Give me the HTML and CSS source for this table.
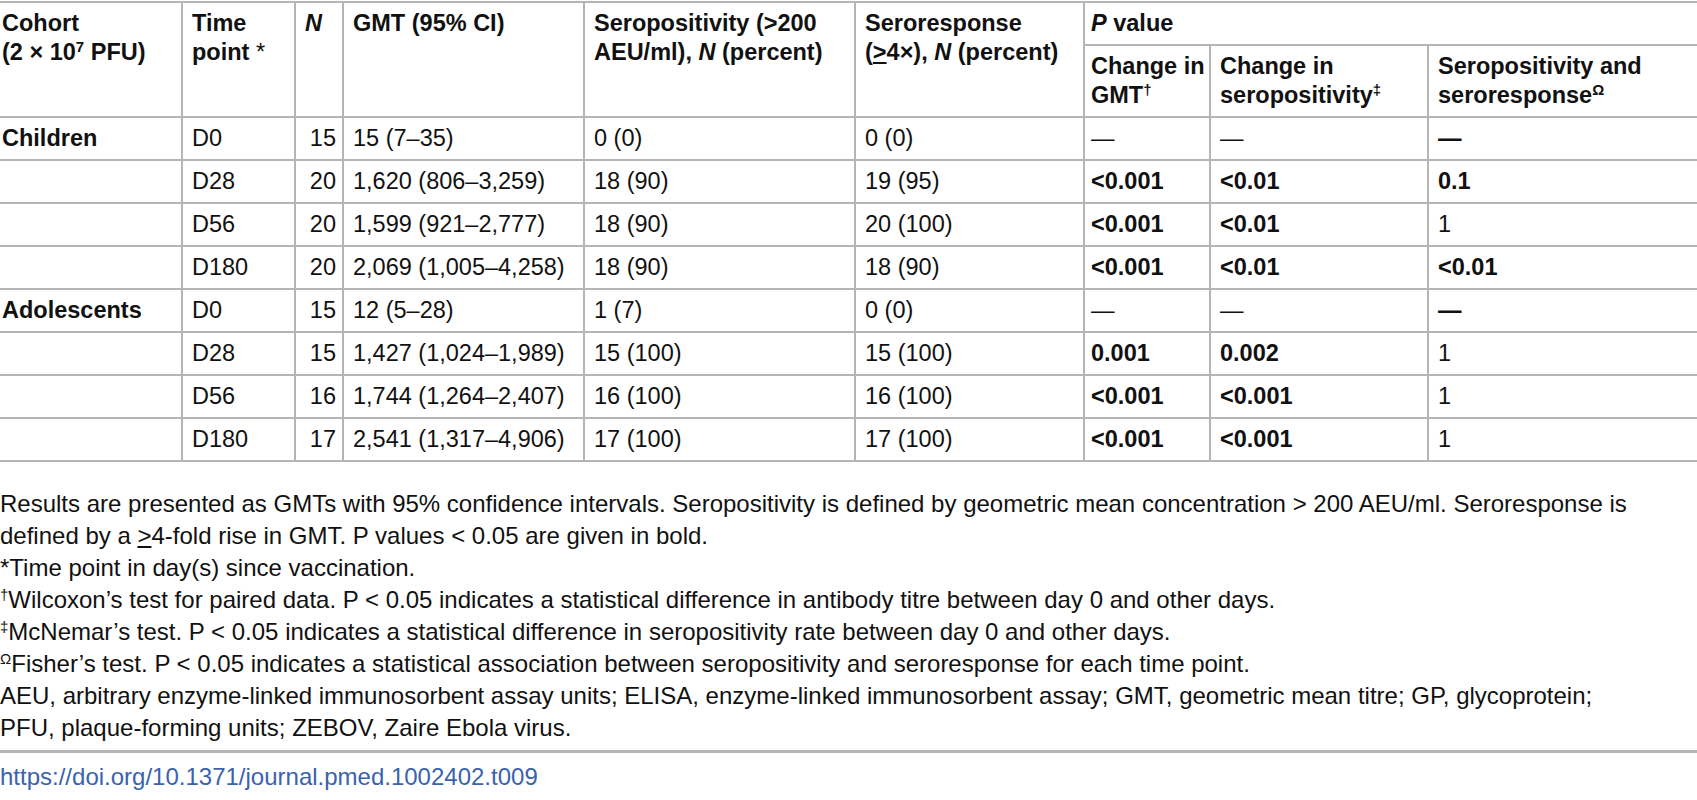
FILE: index.html
```html
<!DOCTYPE html>
<html lang="en">
<head>
<meta charset="utf-8">
<title>Table 9</title>
<link rel="stylesheet" href="styles.css">
</head>
<body>
<div class="page">
  <table class="data">
    <colgroup>
      <col class="c1"><col class="c2"><col class="c3"><col class="c4"><col class="c5"><col class="c6"><col class="c7"><col class="c8"><col class="c9">
    </colgroup>
    <thead>
      <tr>
        <th rowspan="2" class="first">Cohort<br>(2 × 10<sup>7</sup> PFU)</th>
        <th rowspan="2">Time<br>point <span class="ast">*</span></th>
        <th rowspan="2"><i>N</i></th>
        <th rowspan="2">GMT (95% CI)</th>
        <th rowspan="2">Seropositivity (&gt;200 AEU/ml), <i>N</i> (percent)</th>
        <th rowspan="2">Seroresponse (<u>&gt;</u>4×), <i>N</i> (percent)</th>
        <th colspan="3" class="pv"><i>P</i> value</th>
      </tr>
      <tr>
        <th class="pv">Change in GMT<sup>†</sup></th>
        <th>Change in seropositivity<sup>‡</sup></th>
        <th>Seropositivity and seroresponse<sup>Ω</sup></th>
      </tr>
    </thead>
    <tbody>
      <tr><td class="first b">Children</td><td>D0</td><td class="n">15</td><td>15 (7–35)</td><td>0 (0)</td><td>0 (0)</td><td class="pv">—</td><td>—</td><td class="b">—</td></tr>
      <tr><td class="first"></td><td>D28</td><td class="n">20</td><td>1,620 (806–3,259)</td><td>18 (90)</td><td>19 (95)</td><td class="pv b">&lt;0.001</td><td class="b">&lt;0.01</td><td class="b">0.1</td></tr>
      <tr><td class="first"></td><td>D56</td><td class="n">20</td><td>1,599 (921–2,777)</td><td>18 (90)</td><td>20 (100)</td><td class="pv b">&lt;0.001</td><td class="b">&lt;0.01</td><td>1</td></tr>
      <tr><td class="first"></td><td>D180</td><td class="n">20</td><td>2,069 (1,005–4,258)</td><td>18 (90)</td><td>18 (90)</td><td class="pv b">&lt;0.001</td><td class="b">&lt;0.01</td><td class="b">&lt;0.01</td></tr>
      <tr><td class="first b">Adolescents</td><td>D0</td><td class="n">15</td><td>12 (5–28)</td><td>1 (7)</td><td>0 (0)</td><td class="pv">—</td><td>—</td><td class="b">—</td></tr>
      <tr><td class="first"></td><td>D28</td><td class="n">15</td><td>1,427 (1,024–1,989)</td><td>15 (100)</td><td>15 (100)</td><td class="pv b">0.001</td><td class="b">0.002</td><td>1</td></tr>
      <tr><td class="first"></td><td>D56</td><td class="n">16</td><td>1,744 (1,264–2,407)</td><td>16 (100)</td><td>16 (100)</td><td class="pv b">&lt;0.001</td><td class="b">&lt;0.001</td><td>1</td></tr>
      <tr><td class="first"></td><td>D180</td><td class="n">17</td><td>2,541 (1,317–4,906)</td><td>17 (100)</td><td>17 (100)</td><td class="pv b">&lt;0.001</td><td class="b">&lt;0.001</td><td>1</td></tr>
    </tbody>
  </table>
  <div class="notes">
    <p>Results are presented as GMTs with 95% confidence intervals. Seropositivity is defined by geometric mean concentration &gt; 200 AEU/ml. Seroresponse is defined by a <u>&gt;</u>4-fold rise in GMT. P values &lt; 0.05 are given in bold.</p>
    <p>*Time point in day(s) since vaccination.</p>
    <p><sup>†</sup>Wilcoxon’s test for paired data. P &lt; 0.05 indicates a statistical difference in antibody titre between day 0 and other days.</p>
    <p><sup>‡</sup>McNemar’s test. P &lt; 0.05 indicates a statistical difference in seropositivity rate between day 0 and other days.</p>
    <p><sup>Ω</sup>Fisher’s test. P &lt; 0.05 indicates a statistical association between seropositivity and seroresponse for each time point.</p>
    <p>AEU, arbitrary enzyme-linked immunosorbent assay units; ELISA, enzyme-linked immunosorbent assay; GMT, geometric mean titre; GP, glycoprotein; PFU, plaque-forming units; ZEBOV, Zaire Ebola virus.</p>
  </div>
  <div class="doi"><a href="#">https://doi.org/10.1371/journal.pmed.1002402.t009</a></div>
</div>
</body>
</html>
```

FILE: styles.css
```css
html, body {
  margin: 0;
  padding: 0;
  background: #fff;
}
.page {
  font-family: "Liberation Sans", Arial, Helvetica, sans-serif;
  color: #111;
  font-size: 24px;
  width: 1697px;
}
.data {
  width: 1697px;
  border-collapse: collapse;
  table-layout: fixed;
  margin-top: 1px;
  line-height: 29px;
  font-size: 23.5px;
}
.c1 { width: 182px; }
.c2 { width: 113px; }
.c3 { width: 48px; }
.c4 { width: 241px; }
.c5 { width: 271px; }
.c6 { width: 229px; }
.c7 { width: 126px; }
.c8 { width: 218px; }
.c9 { width: 269px; }
.data th, .data td {
  border: 2px solid #b5b5b5;
  padding: 6px 9px;
  text-align: left;
  vertical-align: top;
}
.data th {
  font-weight: bold;
}
.data td {
  font-weight: normal;
  vertical-align: middle;
  white-space: nowrap;
}
.data tr > :first-child { border-left: none; }
.data tr > :last-child { border-right: none; }
.data .first { padding-left: 2px; }
.data .pv { padding-left: 6px; padding-right: 2px; }
.data td.n { text-align: right; padding-right: 6px; }
.data .b { font-weight: bold; }
.data sup {
  font-size: 15px;
  line-height: 0;
  vertical-align: 8px;
}
.ast { font-weight: normal; }
.notes {
  margin-top: 26px;
  line-height: 32px;
  width: 1650px;
}
.notes p { margin: 0; }
.notes sup {
  font-size: 15px;
  line-height: 0;
  vertical-align: 8px;
}
.doi {
  border-top: 3px solid #b5b5b5;
  margin-top: 6px;
  padding-top: 8px;
  line-height: 31px;
}
.doi a {
  color: #3a62ad;
  text-decoration: none;
}
```
